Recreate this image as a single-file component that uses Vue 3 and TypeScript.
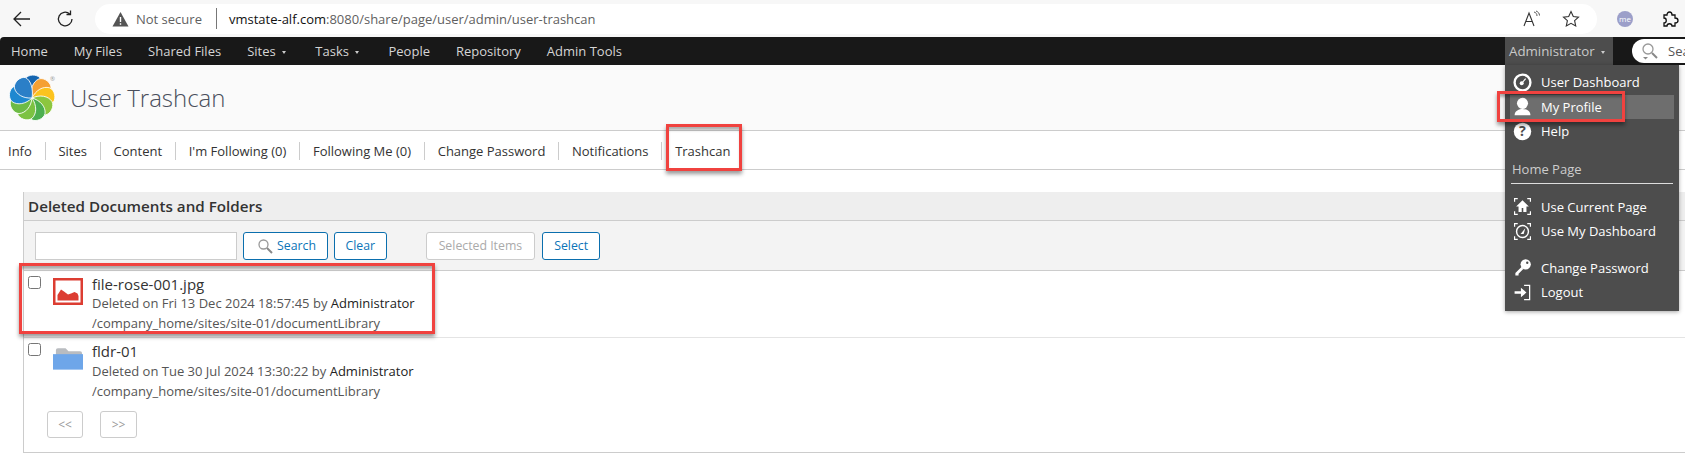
<script setup lang="ts">
const navItems = [
  { label: 'Home', caret: false },
  { label: 'My Files', caret: false },
  { label: 'Shared Files', caret: false },
  { label: 'Sites', caret: true },
  { label: 'Tasks', caret: true },
  { label: 'People', caret: false },
  { label: 'Repository', caret: false },
  { label: 'Admin Tools', caret: false },
]
const tabs = ['Info', 'Sites', 'Content', "I'm Following (0)", 'Following Me (0)', 'Change Password', 'Notifications', 'Trashcan']
const petals = [
  { a: 0, c: '#1565b0' },
  { a: 40, c: '#f5a033' },
  { a: 80, c: '#fcc31e' },
  { a: 120, c: '#8cc63f' },
  { a: 160, c: '#4caf50' },
  { a: 200, c: '#7cc242' },
  { a: 240, c: '#6dbb45' },
  { a: 280, c: '#1e88d0' },
  { a: 320, c: '#2b7fc7' },
]
</script>

<template>
  <div class="page">
    <div class="chrome">
      <svg class="back" width="20" height="20" viewBox="0 0 20 20"><path d="M18 10H2M9 3l-7 7 7 7" fill="none" stroke="#222" stroke-width="1.3"/></svg>
      <svg class="reload" width="20" height="20" viewBox="0 0 20 20"><path d="M16 10a6.800 6.800 0 1 1-2.300-5.100" fill="none" stroke="#222" stroke-width="1.300"/><path d="M14.500 1.500v4h-4" fill="none" stroke="#222" stroke-width="1.300"/></svg>
      <div class="address">
        <svg width="17" height="16" viewBox="0 0 17 16"><path d="M8.500 1 16.500 15.500H.5z" fill="#555"/><path d="M8.500 6v5M8.500 12.200v1.500" stroke="#fff" stroke-width="1.400"/></svg>
        <span class="insecure">Not secure</span>
        <span class="addr-sep"></span>
        <span class="url"><b>vmstate-alf.com</b>:8080/share/page/user/admin/user-trashcan</span>
        <span class="addr-spacer"></span>
        <svg class="read" width="18" height="18" viewBox="0 0 18 18"><path d="M1 16 6 3l5 13M3 11.500h6" fill="none" stroke="#333" stroke-width="1.100"/><path d="M11 2c2 .5 3 2 3 4M13 1c2 .7 3.500 2.300 3.500 4.500" fill="none" stroke="#444" stroke-width=".9"/></svg>
        <svg class="star" width="18" height="18" viewBox="0 0 18 18"><path d="m9 1.500 2.300 5 5.200.6-3.900 3.600 1.100 5.300L9 13.300 4.300 16l1.100-5.300L1.500 7.100l5.200-.6z" fill="none" stroke="#333" stroke-width="1.100"/></svg>
      </div>
      <div class="avatar">me</div>
      <svg class="puzzle" width="18" height="18" viewBox="0 0 18 18"><path d="M3 5h3c0-4 5-4 5 0h3v3c4 0 4 5 0 5v3h-3c0-3-5-3-5 0H3v-3c3 0 3-5 0-5z" fill="none" stroke="#111" stroke-width="1.300"/></svg>
    </div>

    <nav class="nav">
      <a v-for="item in navItems" :key="item.label" class="nav-item">{{ item.label }}<i v-if="item.caret" class="caret"></i></a>
      <span class="nav-spacer"></span>
      <a class="nav-user">Administrator<i class="caret"></i></a>
      <div class="search">
        <svg width="18" height="18" viewBox="0 0 18 18"><circle cx="7" cy="7" r="5" fill="#fff" stroke="#999" stroke-width="1.300"/><path d="m11 11 5 5" stroke="#888" stroke-width="2"/><path d="m2 15 2.500 2.500L7 15z" fill="#888"/></svg>
        <span>Search</span>
      </div>
    </nav>

    <header class="title-bar">
      <svg class="logo" width="52" height="50" viewBox="-25 -25 52 50">
        <g v-for="p in petals" :key="p.a" :transform="`rotate(${p.a})`">
          <path d="M0 0C-7-5-10-13-7-19-4-24 5-24 8-20 11-14 6-5 0 0Z" :fill="p.c" stroke="#fff" stroke-width=".8"/>
        </g>
        <text x="18" y="-17" class="reg">®</text>
      </svg>
      <h1>User Trashcan</h1>
    </header>

    <div class="tabs">
      <template v-for="(t, i) in tabs" :key="t">
        <span v-if="i" class="tab-sep"></span>
        <a class="tab">{{ t }}</a>
      </template>
    </div>

    <main class="panel">
      <div class="panel-title">Deleted Documents and Folders</div>
      <div class="toolbar">
        <input class="search-input" type="text" />
        <button class="btn search-btn">
          <svg width="16" height="16" viewBox="0 0 16 16"><circle cx="6.500" cy="6.500" r="4.500" fill="none" stroke="#999" stroke-width="1.300"/><path d="m10 10 5 5" stroke="#888" stroke-width="2"/></svg>
          Search
        </button>
        <button class="btn clear">Clear</button>
        <button class="btn disabled">Selected Items</button>
        <button class="btn">Select</button>
      </div>

      <div class="row">
        <input class="check" type="checkbox" />
        <svg class="ficon" width="30" height="27" viewBox="0 0 30 27">
          <rect x="1.250" y="1.250" width="27.500" height="24.500" fill="#fff" stroke="#dc3d32" stroke-width="2.500"/>
          <path d="M4.500 22.500V17L8 11.500l3 2 4 3 3-1 3.500-1.500 3 1.500 1 2.500v4.500z" fill="#dc3d32"/>
        </svg>
        <div class="info">
          <div class="name">file-rose-001.jpg</div>
          <div class="meta">Deleted on Fri 13 Dec 2024 18:57:45 by <b>Administrator</b></div>
          <div class="meta">/company_home/sites/site-01/documentLibrary</div>
        </div>
      </div>
      <div class="row second">
        <input class="check" type="checkbox" />
        <svg class="ficon" width="30" height="23" viewBox="0 0 31 23">
          <path d="M3 3q0-2 2-2h8l3 3h12q2 0 2 2v4H3z" fill="#b9bcc0"/>
          <path d="M0 7h31v16H0z" fill="#6ea6e9"/>
        </svg>
        <div class="info">
          <div class="name">fldr-01</div>
          <div class="meta">Deleted on Tue 30 Jul 2024 13:30:22 by <b>Administrator</b></div>
          <div class="meta">/company_home/sites/site-01/documentLibrary</div>
        </div>
      </div>
      <div class="pager">
        <button class="pg">&lt;&lt;</button>
        <button class="pg next">&gt;&gt;</button>
      </div>
    </main>

    <div class="menu">
      <div class="mi"><svg width="24" height="24" viewBox="0 0 24 24"><circle cx="12" cy="12" r="10" fill="none" stroke="#fff" stroke-width="3"/><circle cx="11" cy="13" r="2.500" fill="#fff"/><path d="M11 13 16 7" stroke="#fff" stroke-width="1.500"/></svg><span>User Dashboard</span></div>
      <div class="mi active"><svg width="24" height="24" viewBox="0 0 24 24"><circle cx="12" cy="8" r="7" fill="#fff"/><path d="M2 23c0-6 6-8 10-8s10 2 10 8z" fill="#fff"/></svg><span>My Profile</span></div>
      <div class="mi"><svg width="24" height="24" viewBox="0 0 24 24"><circle cx="12" cy="12" r="11" fill="#fff"/><text x="12" y="18" text-anchor="middle" class="q">?</text></svg><span>Help</span></div>
      <div class="menu-head">Home Page</div>
      <div class="mi"><svg width="24" height="24" viewBox="0 0 24 24"><path d="M2 6V2h4M18 2h4v4M2 18v4h4M18 22h4v-4" fill="none" stroke="#fff" stroke-width="1.500"/><path d="M12 4 4 12h3v7h4v-5h2v5h4v-7h3z" fill="#fff"/></svg><span>Use Current Page</span></div>
      <div class="mi"><svg width="24" height="24" viewBox="0 0 24 24"><path d="M2 6V2h4M18 2h4v4M2 18v4h4M18 22h4v-4" fill="none" stroke="#fff" stroke-width="1.500"/><circle cx="12" cy="12" r="7.500" fill="none" stroke="#fff" stroke-width="1.800"/><path d="M9.500 15 15.500 8l-2 7z" fill="#fff"/></svg><span>Use My Dashboard</span></div>
      <div class="mi gap"><svg width="24" height="24" viewBox="0 0 24 24"><circle cx="16" cy="8" r="6.500" fill="#fff"/><path d="M11 11 3 19v3h4v-2l6-6z" fill="#fff"/><circle cx="18" cy="6" r="1.500" fill="#4d4d4d"/></svg><span>Change Password</span></div>
      <div class="mi"><svg width="24" height="24" viewBox="0 0 24 24"><path d="M2 10.500h8V6l7 6-7 6v-4.500H2z" fill="#fff"/><path d="M14 3h7v18h-7" fill="none" stroke="#fff" stroke-width="1.600"/></svg><span>Logout</span></div>
    </div>

    <div class="mark mark-profile"></div>
    <div class="mark mark-trash"></div>
    <div class="mark mark-file"></div>
  </div>
</template>

<style scoped>
.page {
  position: relative;
  width: 1685px;
  height: 455px;
  overflow: hidden;
  background: #fff;
  font-family: "Open Sans", sans-serif;
  color: #333;
}
.chrome {
  height: 37px;
  background: #f7f7f7;
  display: flex;
  align-items: center;
  padding-left: 12px;
  box-sizing: border-box;
}
.back { margin-right: 24px; }
.reload { margin-right: 19px; }
.address {
  width: 1502px;
  height: 30px;
  border-radius: 15px;
  background: #fff;
  display: flex;
  align-items: center;
  padding: 0 17px 0 17px;
  box-sizing: border-box;
  font-size: 13px;
  color: #5f5f5f;
}
.insecure { margin-left: 7px; }
.addr-sep { width: 1px; height: 21px; background: #777; margin: 0 12px 0 14px; }
.url b { font-weight: 400; color: #111; }
.addr-spacer { flex: 1; }
.read { margin-right: 21px; }
.avatar {
  width: 16px; height: 16px; border-radius: 50%;
  background: #9c9fc9; color: #fff; font-size: 8px; line-height: 16px; text-align: center;
  margin-left: 20px;
}
.puzzle { margin-left: 28px; }

.nav {
  height: 28px;
  background: #181818;
  display: flex;
  align-items: center;
  font-size: 13px;
  color: #d5d5d5;
  padding-left: 11px;
  border-radius: 4px 0 0 0;
}
.nav-item { margin-right: 26px; white-space: nowrap; }
.caret {
  display: inline-block;
  width: 0; height: 0;
  border: 2.500px solid transparent;
  border-top: 3px solid #ccc;
  border-bottom: 0;
  margin: 0 3.600px 0 6px;
  vertical-align: 2px;
}
.nav-spacer { flex: 1; }
.nav-user {
  width: 108px; height: 28px; line-height: 28px;
  background: #4d4d4d;
  padding-left: 4px;
  box-sizing: border-box;
  color: #c9c9c9;
  font-size: 13.300px;
  white-space: nowrap;
}
.search {
  width: 90px; height: 24px; margin: 0 -37px 0 19px;
  background: #fff;
  border-radius: 12px 0 0 12px;
  display: flex; align-items: center;
  padding-left: 9px;
  box-sizing: border-box;
  gap: 9px;
  color: #555;
}
.title-bar {
  height: 65px;
  background: #fafafa;
  border-bottom: 1px solid #ccc;
  box-sizing: content-box;
  display: flex;
  align-items: center;
  padding-left: 7px;
}
.title-bar h1 {
  font-size: 24px;
  font-weight: 300;
  color: #4a4f5c;
  margin: 0 0 0 11px;
}
.reg { font: 6px "Open Sans", sans-serif; fill: #999; }
.tabs {
  height: 39px;
  border-bottom: 1px solid #ccc;
  display: flex;
  align-items: center;
  font-size: 13px;
  padding: 1px 0 0 8px;
  box-sizing: border-box;
  color: #333;
}
.tab-sep { width: 1px; height: 18px; background: #ccc; margin: 0 12.800px; }
.panel {
  margin: 22px 0 0 23px;
  width: 1700px;
  height: 261px;
  border-left: 1px solid #ccc;
  border-bottom: 1px solid #ccc;
  box-sizing: border-box;
}
.panel-title {
  height: 28px;
  background: #eee;
  border-bottom: 1px solid #ccc;
  box-sizing: content-box;
  font-size: 15.200px;
  font-weight: 600;
  line-height: 29px;
  padding-left: 4px;
  color: #333;
}
.toolbar {
  height: 49px;
  background: #f3f3f3;
  border-bottom: 1px solid #ccc;
  display: flex;
  align-items: center;
  padding-left: 11px;
}
.search-input {
  width: 202px; height: 28px;
  border: 1px solid #ccc;
  padding: 0;
  box-sizing: border-box;
  background: #fff;
  margin-right: 6px;
}
.btn {
  height: 28px;
  border: 1px solid #0b6fae;
  border-radius: 3px;
  background: #fff;
  color: #0b74b8;
  font: 12.300px "Open Sans", sans-serif;
  padding: 0 11px;
  display: flex; align-items: center; gap: 4px;
}
.search-btn { padding: 0 10px 0 13px; width: 85px; }
.clear { margin-left: 6px; margin-right: 39px; padding: 0 10.500px; }
.disabled { border-color: #ccc; color: #aaa; margin-right: 7px; padding: 0 12px; }
.row {
  height: 66px;
  border-bottom: 1px solid #e4e4e4;
  display: flex;
  position: relative;
}
.row.second { border-bottom: 0; height: 73px; }
.check {
  width: 13px; height: 13px;
  margin: 5px 0 0 4px;
}
.ficon { margin: 7px 0 0 12px; flex: none; }
.row.second .ficon { margin-top: 9px; }
.info { margin-left: 9px; }
.name { font-size: 15px; line-height: 19px; margin-top: 4px; color: #333; }
.meta { font-size: 13px; line-height: 19.500px; color: #555; }
.row.second .meta { position: relative; top: 1px; }
.meta b { font-weight: 400; color: #222; }
.pager { display: flex; gap: 17px; padding-left: 23px; }
.pg {
  width: 36px; height: 27px;
  border: 1px solid #ccc; border-radius: 3px;
  background: #fff; color: #999;
  font: 12px "Open Sans", sans-serif;
  padding: 0;
}
.pg.next { width: 37px; }
.menu {
  position: absolute;
  left: 1505px; top: 65px;
  width: 174px; height: 246px;
  background: #4d4d4d;
  box-shadow: 0 1px 4px rgba(0,0,0,.35);
  color: #fff;
  font-size: 13px;
  padding: 5px 5px 0;
  box-sizing: border-box;
}
.mi {
  height: 24.500px;
  display: flex;
  align-items: center;
  gap: 9px;
  padding-left: 3px;
}
.mi svg { width: 19px; height: 19px; flex: none; }
.mi.active { background: #6e6e6e; }
.mi.gap { margin-top: 12px; }
.q { font: 700 18px "Open Sans", sans-serif; fill: #4d4d4d; }
.menu-head {
  margin: 16px 1px 11px;
  padding: 0 0 5px 1px;
  border-bottom: 1px solid #ddd;
  color: #ccc;
  font-size: 13px;
}
.mark {
  position: absolute;
  border: 3px solid #f0423f;
  box-shadow: 0 3px 4px rgba(0,0,0,.4), inset 0 4px 3px -1px rgba(0,0,0,.3);
  box-sizing: border-box;
}
.mark-profile { left: 1497px; top: 91px; width: 128px; height: 31px; }
.mark-trash { left: 666px; top: 124px; width: 76px; height: 47px; }
.mark-file { left: 19px; top: 263px; width: 416px; height: 71px; }
</style>
